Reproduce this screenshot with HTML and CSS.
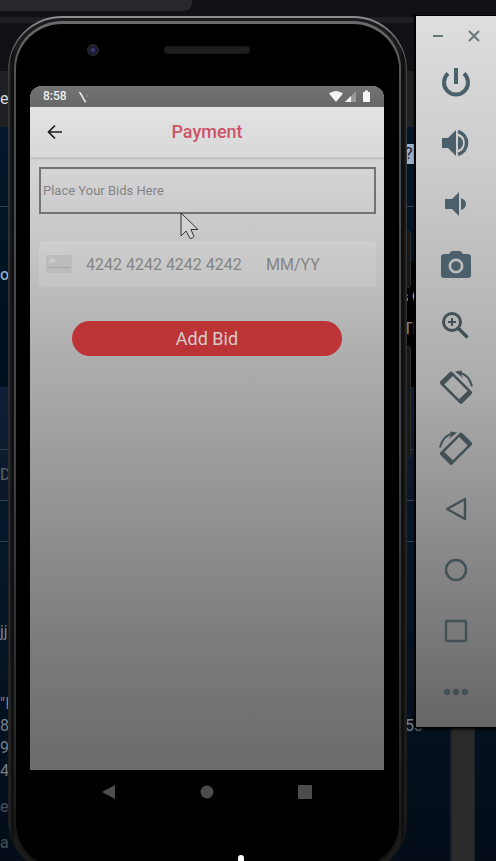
FILE: index.html
```html
<!DOCTYPE html>
<html lang="en">
<head>
<meta charset="utf-8">
<meta name="viewport" content="width=device-width, initial-scale=1">
<title>Payment</title>
<link rel="stylesheet" href="styles.css">
</head>
<body>
<div class="desktop">
  <div class="backdrop">
    <div class="tab"></div>
    <div class="band band-bar"></div>
    <div class="band band-panel"></div>
    <div class="band band-page"></div>
    <div class="band band-block"></div>
    <div class="terminal"></div>
    <div class="rule rule-a"></div>
    <div class="rule rule-b"></div>
    <div class="rule rule-c"></div>
    <div class="rule rule-d"></div>
    <div class="scroll-track"></div>
    <span class="bit b1">e</span>
    <span class="bit b2">o</span>
    <span class="bit b3">D</span>
    <span class="bit b4">jj.</span>
    <span class="bit b5">"I</span>
    <span class="bit b6">8</span>
    <span class="bit b7">9</span>
    <span class="bit b8">4</span>
    <span class="bit b9">e</span>
    <span class="bit b10">a</span>
    <span class="bit b11">?</span>
    <span class="bit b12">s C</span>
    <span class="bit b13">TF</span>
    <span class="bit b14">53</span>
    <span class="side-key key-power"></span>
    <span class="side-key key-volume"></span>
  </div>

  <div class="phone">
    <div class="glass">
      <div class="brow"><span class="lens"></span><span class="speaker"></span></div>
      <main class="screen">
        <div class="status">
          <span class="clock">8:58</span>
          <svg class="status-mark" viewBox="0 0 12 12"><path d="M1 1l2 1 5 9-1 .5z" fill="#eee" stroke="#eee" stroke-width=".5"/><path d="M9 4v2" stroke="#999"/></svg>
          <svg class="status-icons" viewBox="0 0 42 14">
            <path d="M0 3.500Q7 -1.500 14 3.500L7 12z" fill="#f4f4f4"/>
            <path d="M16 12L27 1v11z" fill="#999"/><path d="M16 12l6-6v6z" fill="#f4f4f4"/>
            <path d="M34 2h2V.5h3V2h2v10h-7z" fill="#f4f4f4"/>
          </svg>
        </div>
        <header class="appbar">
          <button class="back" aria-label="Back">
            <svg viewBox="0 0 16 16"><path d="M15 8H2M8 1.500L1.500 8 8 14.500" fill="none" stroke="#1b1b1b" stroke-width="1.700"/></svg>
          </button>
          <h1>Payment</h1>
        </header>
        <form class="form">
          <input class="bid" type="text" aria-label="Place Your Bids Here" placeholder="Place Your Bids Here">
          <div class="card">
            <svg class="card-icon" viewBox="0 0 26 18"><rect width="26" height="18" rx="2" fill="#bbb"/><path d="M3 4q4-2 8 1l-3 3H3z" fill="#c9c9c9"/><path d="M2 12.500h22" stroke="#a4a4a4"/></svg>
            <input class="number" type="text" aria-label="Card number" placeholder="4242 4242 4242 4242">
            <input class="expiry" type="text" aria-label="Expiry date" placeholder="MM/YY">
          </div>
          <button class="submit" type="button">Add Bid</button>
        </form>
      </main>
      <nav class="softkeys">
        <button aria-label="Back"><svg viewBox="0 0 14 14"><path d="M0 7L13 0v14z"/></svg></button>
        <button aria-label="Home"><svg viewBox="0 0 14 14"><circle cx="7" cy="7" r="6.500"/></svg></button>
        <button aria-label="Recent apps"><svg viewBox="0 0 14 14"><rect width="14" height="14" rx="1"/></svg></button>
      </nav>
    </div>
  </div>

  <aside class="tools">
    <div class="window-buttons">
      <button aria-label="Minimize"><svg viewBox="0 0 12 12"><path d="M1 6h10"/></svg></button>
      <button aria-label="Close"><svg viewBox="0 0 12 12"><path d="M1 1l10 10M11 1L1 11"/></svg></button>
    </div>
    <button class="tool" aria-label="Power"><svg viewBox="0 0 36 36"><path class="line heavy" d="M18 4v16M10 9.500A12 12 0 1 0 26 9.500"/></svg></button>
    <button class="tool" aria-label="Volume up"><svg viewBox="0 0 36 36"><path d="M4 13h6l8-8v26l-8-8H4zM20 11q5 2 5 7t-5 7z"/><path class="line thick" d="M20 6.500A12 12 0 0 1 20 29.500"/></svg></button>
    <button class="tool" aria-label="Volume down"><svg viewBox="0 0 36 36"><path d="M7 13h7l7-7v24l-7-7H7zM23 12q5 2 5 6t-5 6z"/></svg></button>
    <button class="tool" aria-label="Take screenshot"><svg viewBox="0 0 36 36"><path fill-rule="evenodd" d="M13.500 4L11 7H6q-3 0-3 3v18q0 3 3 3h24q3 0 3-3V10q0-3-3-3h-5l-2.500-3zM18 11.500a7.500 7.500 0 1 1 0 15 7.500 7.500 0 0 1 0-15z"/><circle cx="18" cy="19" r="4.800"/></svg></button>
    <button class="tool" aria-label="Zoom"><svg viewBox="0 0 36 36"><circle class="line mid" cx="14" cy="14" r="8.500"/><path class="line thin" d="M14 10v8M10 14h8"/><path class="line thick" d="M20 20l9.500 9.500"/></svg></button>
    <button class="tool" aria-label="Rotate left"><svg viewBox="0 0 36 36"><path fill-rule="evenodd" transform="rotate(45 18 18)" d="M5 10h27q2 0 2 2v13q0 2-2 2H5q-2 0-2-2V12q0-2 2-2zM8 12.500v12h21v-12z"/><path class="line thin" d="M20 3.500Q31 5 34 17.500"/><path d="M17 2.500l7-1-1 3 2 4.500z"/></svg></button>
    <button class="tool" aria-label="Rotate right"><svg viewBox="0 0 36 36"><g transform="matrix(-1 0 0 1 36 0)"><path fill-rule="evenodd" transform="rotate(45 18 18)" d="M5 10h27q2 0 2 2v13q0 2-2 2H5q-2 0-2-2V12q0-2 2-2zM8 12.500v12h21v-12z"/><path class="line thin" d="M20 3.500Q31 5 34 17.500"/><path d="M17 2.500l7-1-1 3 2 4.500z"/></g></svg></button>
    <button class="tool" aria-label="Back"><svg viewBox="0 0 36 36"><path class="line" stroke-linejoin="round" d="M27 8v20L9 18z"/></svg></button>
    <button class="tool" aria-label="Home"><svg viewBox="0 0 36 36"><circle class="line" cx="18" cy="18" r="10"/></svg></button>
    <button class="tool" aria-label="Overview"><svg viewBox="0 0 36 36"><rect class="line" x="8" y="8" width="20" height="20" rx="1"/></svg></button>
    <button class="tool" aria-label="More"><svg viewBox="0 0 36 36"><circle cx="9" cy="18" r="3.200"/><circle cx="18" cy="18" r="3.200"/><circle cx="27" cy="18" r="3.200"/></svg></button>
  </aside>

  <svg class="cursor" viewBox="0 0 20 28"><path d="M1 1v23l5-5 4 7.500q3 0 4-2L11 17.500h7z" fill="#d2d2d2" stroke="#333"/></svg>
  <span class="bottom-dot"></span>
</div>
</body>
</html>
```

FILE: styles.css
```css
* { box-sizing: border-box; }

body {
  margin: 0;
  background: #020b14;
  font-family: Roboto, "Noto Sans", sans-serif;
}

button, input {
  margin: 0;
  padding: 0;
  border: 0;
  background: none;
  font-family: inherit;
}

svg { display: block; }

.desktop {
  position: relative;
  display: flex;
  align-items: flex-start;
  gap: 9px;
  height: 100vh;
  padding: 16px 0 0 8px;
  overflow: hidden;
}

/* Windows behind the emulator */
.backdrop {
  position: absolute;
  inset: 0;
  background: #0f1115;
}

.backdrop > * { position: absolute; }

.tab {
  top: 0;
  left: 0;
  width: 192px;
  height: 11px;
  background: #26282d;
  border-radius: 0 0 8px 0;
}

.band { left: 0; right: 0; }
.band-bar { top: 17px; height: 6px; background: #1d1f22; }
.band-panel { top: 71px; height: 56px; background: #1f2124; }
.band-page { top: 127px; bottom: 0; background: linear-gradient(#00182a, #00101f 35%, #05172a 55%, #040d18); }
.band-block { top: 387px; height: 113px; background: linear-gradient(#102038, #0b1728); }

.terminal { top: 262px; left: 400px; right: 0; height: 125px; background: #000; }

.rule { left: 0; right: 0; height: 1px; background: #2c4254; }
.rule-a { top: 206px; }
.rule-b { top: 449px; }
.rule-c { top: 500px; }
.rule-d { top: 541px; }

.scroll-track {
  top: 727px;
  right: 21px;
  bottom: 0;
  width: 25px;
  background: #2b2b2b;
  border: solid #1b2128;
  border-width: 0 1px 0 2px;
}

.bit { font-size: 16px; line-height: 20px; color: #777f88; white-space: pre; }
.b1 { top: 89px; left: 0; color: #d8d8d8; }
.b2 { top: 265px; left: 0; color: #8fa6cc; font-weight: 500; }
.b3 { top: 465px; left: 0; color: #5d6670; }
.b4 { top: 622px; left: 0; }
.b5 { top: 694px; left: 0; }
.b6 { top: 716px; left: 0; }
.b7 { top: 738px; left: 0; }
.b8 { top: 761px; left: 0; }
.b9 { top: 797px; left: 0; color: #46505a; }
.b10 { top: 833px; left: 0; color: #46505a; }
.b11 { top: 144px; left: 405px; width: 10px; background: #9db0ca; color: #0c1c30; }
.b12 { top: 287px; left: 400px; color: #ddd; font-weight: 500; }
.b13 { top: 319px; left: 403px; color: #888; }
.b14 { top: 716px; left: 405px; }

.side-key { left: 405px; width: 6px; border: 1px solid #2b2b2b; border-radius: 0 3px 3px 0; background: #171717; }
.key-power { top: 231px; height: 57px; }
.key-volume { top: 346px; height: 112px; }

/* Phone */
.phone {
  position: relative;
  flex: 1;
  min-width: 0;
  padding: 3px 5px;
  border: 1px solid transparent;
  border-top-width: 2px;
  border-radius: 54px;
  background:
    linear-gradient(90deg, #2c2e2f, #0c0c0c 3px, #1b1b1b 6px, #1b1b1b calc(100% - 6px), #0c0c0c calc(100% - 3px), #222) padding-box,
    linear-gradient(#8a8c90, #3a3c3e 60px, #2a2b2c 50%, #161616) border-box;
}

.glass {
  padding: 62px 15px 0 14px;
  border: solid transparent;
  border-width: 3px 2px;
  border-radius: 48px;
  background:
    linear-gradient(#000, #000) padding-box,
    linear-gradient(#6a6c6d, #4c4e4f 60px, #404243 50%, #262727 85%, #111) border-box;
}

.brow {
  display: grid;
  grid-template-columns: 1fr 86px 1fr;
  align-items: center;
  height: 14px;
  margin: -43px 0 29px;
}

.lens {
  width: 12px;
  height: 12px;
  margin-left: 57px;
  border: 2px solid #25242e;
  border-radius: 50%;
  background: radial-gradient(#3b3966 20%, #17172e 60%);
}

.speaker { height: 8px; border-radius: 3px; background: #201f1e; border: 1px solid #171717; }

.screen {
  min-height: 684px;
  border-radius: 12px 12px 0 0;
  overflow: hidden;
  background: linear-gradient(#d6d6d8 70px, #c8c8c9 150px, #adadad 274px, #929292 430px, #7d7d7d 550px, #6b6b6b 684px);
}

.status {
  display: flex;
  align-items: center;
  gap: 11px;
  height: 21px;
  padding: 0 13px;
  background: linear-gradient(#737373, #666);
}

.clock { color: #eee; font-size: 12px; font-weight: 500; line-height: 21px; }
.status-mark { width: 12px; height: 12px; }
.status-icons { width: 42px; height: 14px; margin-left: auto; }

.appbar {
  display: grid;
  grid-template-columns: 50px 1fr 50px;
  align-items: center;
  height: 51px;
  background: linear-gradient(#e3e3e3, #d8d8d8);
  border-bottom: 1px solid #c6c6c6;
  box-shadow: 0 1px 2px #b8b8b8;
}

.appbar h1 {
  margin: 0;
  text-align: center;
  color: #ce5368;
  font-size: 18px;
  font-weight: 500;
  line-height: 26px;
}

.back { justify-self: center; }
.back svg { width: 16px; height: 16px; }

.form { display: flex; flex-direction: column; padding: 9px 8px 9px 9px; }

input { min-width: 0; color: #777; }
input::placeholder { color: #848484; opacity: 1; }

.bid {
  height: 47px;
  padding: 0 2px;
  border: 2px solid #727474;
  font-size: 13px;
}

.card {
  display: grid;
  grid-template-columns: 26px 162px 1fr;
  column-gap: 14px;
  align-items: center;
  height: 46px;
  margin-top: 27px;
  padding: 0 7px;
  border-radius: 4px;
  background: linear-gradient(#cdcdcd, #c4c4c4);
}

.card-icon { width: 26px; height: 18px; }
.card input { width: 100%; height: 30px; font-size: 16px; }
.expiry { padding-left: 4px; }

.submit {
  height: 35px;
  margin: 34px 34px 0 33px;
  border-radius: 18px;
  background: #bd3437;
  color: #d5cccc;
  font-size: 18px;
  line-height: 35px;
}

.softkeys {
  display: grid;
  grid-template-columns: repeat(3, 98px);
  justify-content: center;
  height: 98px;
  padding-top: 15px;
}

.softkeys button { justify-self: center; align-self: start; }
.softkeys svg { width: 14px; height: 14px; fill: #4c4c4c; }

/* Emulator toolbar */
.tools {
  position: relative;
  display: flex;
  flex: 0 0 80px;
  flex-direction: column;
  padding-bottom: 5px;
  background: linear-gradient(#dedede, #cdcccc 150px, #acacac 370px, #8a8a8a 530px, #666);
  box-shadow: -1px 0 0 1px #000, 0 2px 4px #000;
}

.window-buttons {
  display: flex;
  justify-content: space-between;
  align-items: center;
  height: 35px;
  padding: 5px 16px 0;
}

.window-buttons svg { width: 12px; height: 12px; fill: none; stroke: #68777a; stroke-width: 2; }

.tool { display: grid; place-items: center; height: 61px; color: #4b606b; }
.tool:nth-of-type(n+5) { color: #435156; }
.tool svg { width: 36px; height: 36px; fill: currentColor; }
.tool .line { fill: none; stroke: currentColor; stroke-width: 2.4px; }
.tool .thin { stroke-width: 2px; }
.tool .mid { stroke-width: 3px; }
.tool .thick { stroke-width: 3.6px; }
.tool .heavy { stroke-width: 4px; }

.cursor { position: absolute; top: 212px; left: 180px; width: 20px; height: 28px; }

.bottom-dot {
  position: absolute;
  bottom: -3px;
  left: 238px;
  width: 6px;
  height: 9px;
  border-radius: 3px;
  background: #fff;
}
```
